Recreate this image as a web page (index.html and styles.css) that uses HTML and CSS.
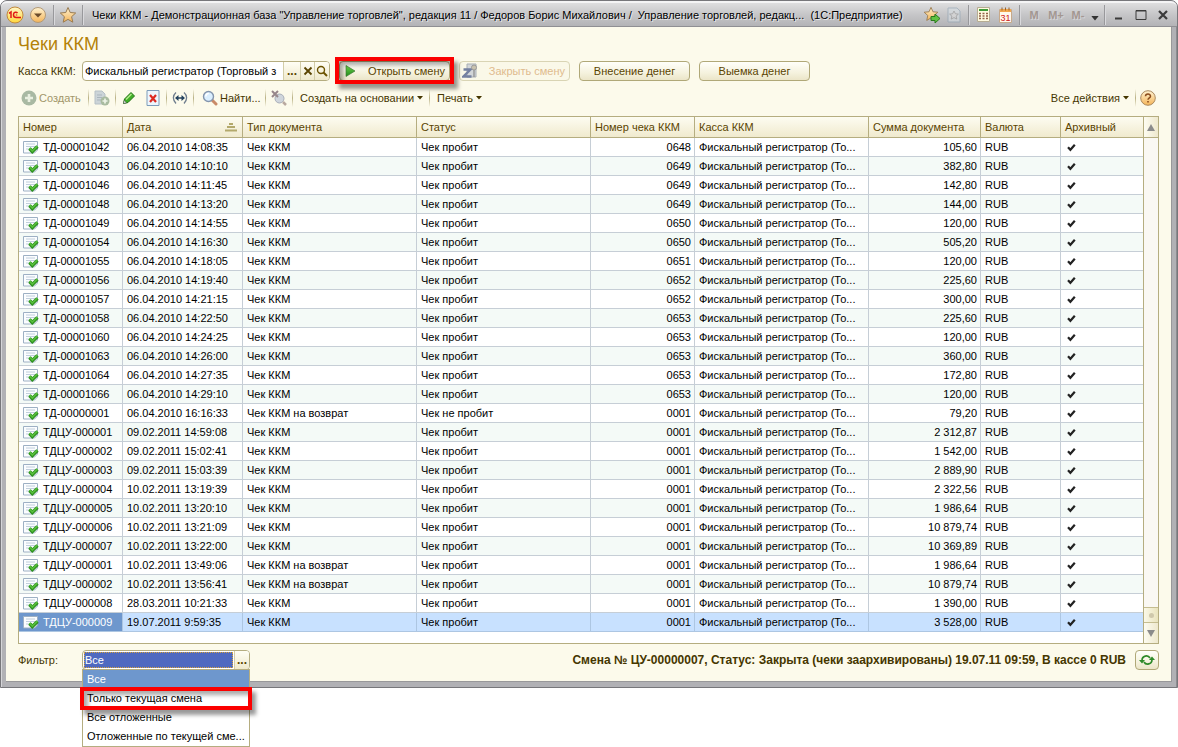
FILE: index.html
```html
<!DOCTYPE html>
<html lang="ru">
<head>
<meta charset="utf-8">
<title>Чеки ККМ</title>
<link rel="stylesheet" href="styles.css">
</head>
<body>
<svg class="defs" aria-hidden="true">
  <defs>
    <linearGradient id="gold" x1="0" y1="0" x2="0" y2="1"><stop offset="0" stop-color="#fff3d2"/><stop offset="1" stop-color="#f4b458"/></linearGradient>
    <linearGradient id="yellow" x1="0" y1="0" x2="0" y2="1"><stop offset="0" stop-color="#fff6c8"/><stop offset="1" stop-color="#ffd83a"/></linearGradient>
    <linearGradient id="green" x1="0" y1="0" x2="0" y2="1"><stop offset="0" stop-color="#6cd04a"/><stop offset="1" stop-color="#1e8a1a"/></linearGradient>
  </defs>
  <symbol id="i-doc" viewBox="0 0 16 14">
    <path d="M.5 1.500h14v8.500l-3 3H.5z" fill="#fbfdff" stroke="#9db0c4"/>
    <path d="M3 4h9M3 6.500h9M3 9h5" stroke="#c0cedb"/>
    <path d="M6.500 8.500l2.800 3L14.500 6.500" fill="none" stroke="#2c8f1f" stroke-width="3.400"/>
    <path d="M6.500 8l2.800 3L14.500 6" fill="none" stroke="#58c03c" stroke-width="1.600"/>
  </symbol>
  <symbol id="i-tick" viewBox="0 0 9 9"><path d="M1 4.200l2.400 2.600L7.800 1.800" fill="none" stroke="#222" stroke-width="2.200"/></symbol>
  <symbol id="i-mag" viewBox="0 0 16 16">
    <path d="M9.500 9.500l4.500 4.500" stroke="#c98a68" stroke-width="3" stroke-linecap="round"/>
    <circle cx="6.500" cy="6.500" r="5" fill="#dbefff" stroke="#8495ad" stroke-width="1.400"/>
    <path d="M3.800 6.500a3 3 0 0 1 3-3" stroke="#fff" stroke-width="1.500" fill="none"/>
  </symbol>
  <symbol id="i-star" viewBox="0 0 18 18"><path d="M9 1.500l2.200 5 5.500.500-4.100 3.700 1.200 5.500L9 13.400l-4.800 2.800 1.200-5.500L1.300 7l5.500-.5z" fill="url(#gold)" stroke="#9a7b50"/></symbol>
  <symbol id="i-down" viewBox="0 0 6 4"><path d="M0 0h6L3 3.500z" fill="currentColor"/></symbol>
</svg>

<div class="window">
  <header class="titlebar">
    <div class="tb-left">
      <button class="tb" aria-label="Главное меню"><svg width="18" height="18" viewBox="0 0 18 18"><circle cx="9" cy="9" r="8" fill="url(#yellow)" stroke="#c28a3c"/><path d="M3 7.300l2-1.300v6M11.500 7.200C10.500 5.600 7.500 5.800 7.500 8.700c0 1.800 1.200 2.800 2.800 2.800H15" fill="none" stroke="#e01818" stroke-width="1.500"/><path d="M11.300 9h-1.500" stroke="#e01818"/></svg></button>
      <button class="tb" aria-label="Меню"><svg width="18" height="18" viewBox="0 0 18 18"><circle cx="9" cy="9" r="7.500" fill="url(#gold)" stroke="#b39a78"/><path d="M5 7.500h8L9 11.500z" fill="#6b4c2c"/></svg></button>
      <i class="sep"></i>
      <button class="tb" aria-label="Избранное"><svg width="18" height="18"><use href="#i-star"/></svg></button>
      <i class="sep"></i>
    </div>
    <div class="caption">Чеки ККМ - Демонстрационная база "Управление торговлей", редакция 11 / Федоров Борис Михайлович /&nbsp; Управление торговлей, редакц...&nbsp; (1С:Предприятие)</div>
    <div class="tb-right">
      <button class="tb" aria-label="Добавить в избранное"><svg width="18" height="18" viewBox="0 0 18 18"><use href="#i-star" width="16" height="16"/><path d="M8 10.500h4V8l5 4.500-5 4.500v-2.500H8z" fill="#5fc244" stroke="#2b7a1c"/></svg></button>
      <button class="tb faint" aria-label="Страница"><svg width="14" height="16" viewBox="0 0 14 16"><path d="M1 1h9l3 3v11H1z" fill="#d6dde2" stroke="#8fa3b3"/><path d="M7 4l1.400 2.800 3 .3-2.300 2 .7 3L7 10.600l-2.800 1.500.7-3-2.300-2 3-.3z" fill="#ddd" stroke="#888" stroke-width=".8"/></svg></button>
      <i class="sep"></i>
      <button class="tb" aria-label="Калькулятор"><svg width="13" height="15" viewBox="0 0 13 15"><path d="M.5.500h12v14H.5z" fill="#fffbe0" stroke="#b6ac92"/><path d="M2 2h9v2H2z" fill="#3f9a38"/><path d="M2 6.500h9M2 9h9M2 11.500h9" stroke="#94634a" stroke-width="1.600" stroke-dasharray="2 1.500"/></svg></button>
      <button class="tb" aria-label="Календарь"><svg width="13" height="16" viewBox="0 0 13 16"><path d="M.5 2.500h12v13H.5z" fill="#fff8ec" stroke="#c7a98a"/><path d="M1 2h11v3H1z" fill="#f1a64c"/><path d="M3 .5v3M6.500.500v3M10 .5v3" stroke="#96602c"/><text x="6.500" y="13.500" class="cal">31</text></svg></button>
      <i class="sep"></i>
      <button class="tb mem">M</button><button class="tb mem">M+</button><button class="tb mem">M-</button>
      <button class="tb narrow" aria-label="Ещё"><svg width="8" height="5" viewBox="0 0 6 4"><use href="#i-down"/></svg></button>
      <i class="sep"></i>
      <button class="tb" aria-label="Свернуть"><svg width="12" height="12"><path d="M2 9.500h7" stroke="#3b3b3b" stroke-width="2"/></svg></button>
      <button class="tb" aria-label="Развернуть"><svg width="12" height="12"><path d="M1 1.500h10v9H1z" fill="none" stroke="#3b3b3b"/><path d="M1 2h10" stroke="#3b3b3b"/></svg></button>
      <button class="tb" aria-label="Закрыть"><svg width="12" height="12"><path d="M2 2l8 8M10 2l-8 8" stroke="#3b3b3b" stroke-width="2.200"/></svg></button>
    </div>
  </header>

  <main class="form">
    <h1>Чеки ККМ</h1>
    <div class="commands">
      <label for="kassa">Касса ККМ:</label>
      <div class="combo kassa">
        <input id="kassa" type="text" value="Фискальный регистратор (Торговый з">
        <button class="dots" aria-label="Выбрать">...</button>
        <button class="clear" aria-label="Очистить"><svg width="10" height="10"><path d="M1.500 1.500l7 7M8.500 1.500l-7 7" stroke="#5a4400" stroke-width="1.800"/></svg></button>
        <button class="look" aria-label="Открыть"><svg width="12" height="12"><circle cx="5" cy="5" r="3.500" fill="none" stroke="#6b5200" stroke-width="1.400"/><path d="M7.500 7.500l3.500 3.500" stroke="#6b5200" stroke-width="2"/></svg></button>
      </div>
      <div class="marked">
        <button class="btn with-icon"><svg width="11" height="12"><path d="M1 .5l9 5.500-9 5.500z" fill="url(#green)" stroke="#3f7a34" stroke-width=".7"/></svg><span>Открыть смену</span></button>
        <div class="frame frame-button"></div>
      </div>
      <button class="btn with-icon" disabled><svg width="16" height="16"><path d="M5 1h9v13H5z" fill="#d3d6d9" stroke="#a9afb6"/><path d="M1.500 6.500h7l-7 7h8" fill="none" stroke="#7480a0" stroke-width="2.400"/><circle cx="12" cy="4.500" r="2.500" fill="#c9c2ae" stroke="#999"/><path d="M12 7v7" stroke="#999" stroke-width="1.500"/></svg><span>Закрыть смену</span></button>
      <button class="btn">Внесение денег</button>
      <button class="btn">Выемка денег</button>
    </div>

    <div class="toolbar">
      <button class="tool create" disabled><svg width="16" height="16"><circle cx="8" cy="8" r="7.500" fill="#a9b9a3"/><path d="M8 4v8M4 8h8" stroke="#e9efe0" stroke-width="2.600"/></svg>Создать</button>
      <i class="line"></i>
      <button class="tool" disabled aria-label="Скопировать"><svg width="16" height="16"><path d="M1 1h7l3 3v10H1z" fill="#ccd4d8" stroke="#b6c0c6"/><path d="M3 5h5M3 7.500h5M3 10h4" stroke="#aab5bd"/><circle cx="11" cy="11" r="4.500" fill="#a9bba0"/><path d="M11 8.500v5M8.500 11h5" stroke="#eef4e8" stroke-width="1.700"/></svg></button>
      <i class="line"></i>
      <button class="tool" aria-label="Изменить"><svg width="14" height="14"><path d="M1.500 12.500l1-4.500L9 1.500l3.500 3.500L6 11.500z" fill="#3fae27" stroke="#237215"/><path d="M4 8.500L9.500 3" stroke="#b4ec8c" stroke-width="1.500"/><path d="M1.500 12.500l.7-3 2.200 2.200z" fill="#fff" stroke="#555" stroke-width=".6"/></svg></button>
      <button class="tool" aria-label="Пометить на удаление"><svg width="14" height="16"><path d="M1 .5h12v15H1z" fill="#eef6fd" stroke="#7d9cba"/><path d="M4 5l6 7M10 5l-6 7" stroke="#dd2a22" stroke-width="2.200"/></svg></button>
      <i class="line"></i>
      <button class="tool" aria-label="Период"><svg width="16" height="14"><path d="M4 1.500C.5 4.500.500 9 4 12.500M12 1.500c3.500 3 3.500 7.500 0 11" fill="none" stroke="#6e7c8d" stroke-width="1.300"/><path d="M4 7h8" stroke="#24425f" stroke-width="1.500"/><path d="M6.500 4v6L3 7zM9.500 4v6L13 7z" fill="#24425f"/></svg></button>
      <i class="line"></i>
      <button class="tool find"><svg width="16" height="16"><use href="#i-mag"/></svg>Найти...</button>
      <i class="line"></i>
      <button class="tool" disabled aria-label="Отменить поиск"><svg width="16" height="16" viewBox="0 0 16 16"><circle cx="8.500" cy="8.500" r="4.500" fill="#cfd5dc" stroke="#a8adb8"/><path d="M12 12l3 3" stroke="#b9a9a0" stroke-width="2.500"/><path d="M1 1l6 6M7 1L1 7" stroke="#96858a" stroke-width="2"/></svg></button>
      <i class="line"></i>
      <button class="tool menu base">Создать на основании<svg width="6" height="4"><use href="#i-down"/></svg></button>
      <i class="line"></i>
      <button class="tool menu">Печать<svg width="6" height="4"><use href="#i-down"/></svg></button>
      <span class="space"></span>
      <button class="tool menu">Все действия<svg width="6" height="4"><use href="#i-down"/></svg></button>
      <i class="line"></i>
      <button class="tool help" aria-label="Справка"><svg width="16" height="16"><circle cx="8" cy="8" r="7.300" fill="url(#gold)" stroke="#ab8a60"/><path d="M5.500 6.300C5.500 3.300 10.500 3.300 10.500 6.200 10.500 7.800 8 8 8 9.800" fill="none" stroke="#8b4d1d" stroke-width="1.500"/><path d="M7.200 11h1.600v1.600H7.200z" fill="#8b4d1d"/></svg></button>
    </div>

    <div class="grid">
      <table>
        <colgroup><col class="c-num"><col class="c-date"><col class="c-type"><col class="c-type"><col class="c-num"><col class="c-type"><col class="c-sum"><col class="c-cur"><col class="c-arch"></colgroup>
        <thead><tr><th>Номер</th><th><div class="sorted">Дата<svg width="12" height="9"><path d="M4 1h4M2 4h8M0 7.500h12" stroke="#b3a96c" stroke-width="2"/></svg></div></th><th>Тип документа</th><th>Статус</th><th>Номер чека ККМ</th><th>Касса ККМ</th><th>Сумма документа</th><th>Валюта</th><th>Архивный</th></tr></thead>
        <tbody id="rows"></tbody>
      </table>
      <div class="scroll">
        <button class="up" aria-label="Вверх"><svg width="8" height="7"><path d="M4 0l4 7H0z" fill="#8b8b8b"/></svg></button>
        <div class="track"></div>
        <div class="thumb"><i></i></div>
        <button class="down" aria-label="Вниз"><svg width="8" height="7"><path d="M4 7l4-7H0z" fill="#8b8b8b"/></svg></button>
      </div>
    </div>

    <footer>
      <label for="filter">Фильтр:</label>
      <div class="combo filter">
        <input id="filter" type="text" value="Все">
        <button class="dots" aria-label="Выбрать фильтр">...</button>
        <ul class="list">
          <li class="active">Все</li>
          <li>Только текущая смена<div class="frame frame-item"></div></li>
          <li>Все отложенные</li>
          <li>Отложенные по текущей сме...</li>
        </ul>
      </div>
      <strong>Смена № ЦУ-00000007, Статус: Закрыта (чеки заархивированы) 19.07.11 09:59, В кассе 0 RUB</strong>
      <button class="btn refresh" aria-label="Обновить"><svg width="16" height="12"><path d="M3 6.500C3 1.500 9 .5 11 4M13 5.500c0 5-6 6-8 2.500" fill="none" stroke="#2f8a2a" stroke-width="1.700"/><path d="M0 6h6L3 9.500zM10 6h6l-3-3.500z" fill="#2f8a2a"/></svg></button>
    </footer>
  </main>
</div>
<script src="app.js"></script>
</body>
</html>
```
FILE: styles.css
```css
* { box-sizing: border-box; }
body { margin: 0; min-height: 100vh; background: #fff; font: 11px/14px "Liberation Sans", Arial, sans-serif; color: #000; }
.defs { position: absolute; width: 0; height: 0; }
svg { display: block; flex: none; }
button, input { font: inherit; color: inherit; margin: 0; padding: 0; border: 0; background: none; }
button { display: flex; align-items: center; justify-content: center; }

.window { border: 1px solid #77777b; border-radius: 7px 7px 0 0; background: #b1b1b5; padding: 0 5px 5px; box-shadow: inset 1px 0 #d5d5d8, inset -1px 0 #8c8c90; }
.titlebar { display: flex; align-items: center; height: 26px; margin: 0 -5px; padding: 0 3px 0 5px; border-radius: 6px 6px 0 0; border-top: 2px solid #f4f4f5; border-bottom: 1px solid #8f8f93; background: linear-gradient(#dededf, #c6c6c8 50%, #b3b3b6); }
.tb-left, .tb-right { display: flex; align-items: center; }
.tb-left { gap: 5px; }
.tb-left .tb { width: 18px; height: 22px; }
.tb-left .tb + .tb { margin-right: 1px; }
.tb-right .tb { width: 22px; height: 22px; }
.tb-right .narrow { width: 12px; align-items: flex-end; padding-bottom: 5px; color: #333; }
.sep { width: 1px; height: 20px; margin: 0 3px; background: #98989b; box-shadow: 1px 0 #d9d9dc; }
.tb-left .sep { margin: 0; }
.caption { flex: 1; min-width: 0; padding-left: 9px; white-space: pre; overflow: hidden; text-shadow: 1px 1px #e6e6e8; }
.faint { opacity: .6; }
.mem { font-weight: bold; color: #a39791; text-shadow: 1px 1px #d5d5d8; }
.cal { font-size: 9px; fill: #d02020; text-anchor: middle; }

.form { padding: 10px 12px 11px; background: #fcfaeb; border: 1px solid #98989a; border-width: 0 1px 1px 0; color: #453600; }
h1 { margin: 0; font-size: 18px; line-height: 14px; font-weight: normal; color: #b48208; }
.commands { display: flex; align-items: center; gap: 9px; height: 20px; margin-top: 10px; }
.commands label, footer label { width: 64px; margin-right: -9px; white-space: nowrap; }
.combo { display: flex; height: 20px; border: 1px solid #b5ad80; border-radius: 4px; background: #fff; }
.combo input { flex: 1; min-width: 0; padding: 0 2px; color: #000; outline: none; }
.combo button { background: linear-gradient(#fffef5, #efe9cc); border-left: 1px solid #d3cda8; }
.combo .dots { width: 17px; font-weight: bold; font-size: 12px; color: #5a4400; }
.combo .clear { width: 14px; }
.combo .look { width: 15px; border-radius: 0 3px 3px 0; }
.kassa { width: 248px; }
.btn { width: 111px; height: 20px; border: 1px solid #b0a878; border-radius: 4px; background: linear-gradient(#fffffa, #f5f2de 60%, #ebe5c8); color: #5a4400; white-space: nowrap; }
.with-icon { justify-content: flex-start; padding: 0 4px 0 5px; }
.with-icon span { flex: 1; text-align: right; }
.btn:disabled { border-color: #d9d4b4; background: #faf8e8; color: #dfbb8e; padding-left: 2px; }
.marked { position: relative; }
.frame { position: absolute; border: 4px solid #fb0000; box-shadow: 4px 5px 4px #0006, inset 4px 4px 4px #0005; pointer-events: none; }
.frame-button { inset: -4px -4px -3px; }
.frame-item { inset: -2px -3px; }

.toolbar { display: flex; align-items: center; height: 24px; margin-top: 5px; }
.tool { min-width: 24px; height: 20px; padding: 0 4px; white-space: nowrap; gap: 3px; color: #453600; }
.tool:disabled { color: #a1966a; }
.create { width: 69px; justify-content: flex-start; padding-left: 3px; gap: 2px; }
.find { width: 69px; justify-content: flex-start; padding-left: 7px; gap: 2px; }
.menu { padding: 0 5px 0 6px; }
.base { width: 134px; }
.line { width: 1px; height: 18px; margin: 0 1px; background: linear-gradient(#fcfaeb, #b9b184, #fcfaeb); }
.space { flex: 1; }
.help { min-width: 22px; padding: 0; }

.grid { display: flex; margin-top: 6px; border: 1px solid #b5ad80; background: #fff; }
table { flex: 1; width: 100%; table-layout: fixed; border-collapse: separate; border-spacing: 0; margin-bottom: 11px; color: #000; }
.c-num { width: 104px; }
.c-date { width: 120px; }
.c-type { width: 174px; }
.c-sum { width: 112px; }
.c-cur { width: 80px; }
.c-arch { width: 82px; }
th, td { padding: 0 4px; text-align: left; font-weight: normal; white-space: nowrap; overflow: hidden; border-right: 1px solid #c6ced6; border-bottom: 1px solid #c6ced6; }
th { height: 21px; color: #5a4400; border-color: #b5ad80; background: linear-gradient(#fdfcf1, #f0eace); }
td { height: 19px; line-height: 18px; }
th:last-child, td:last-child { border-right: 0; }
td:last-child { padding-left: 6px; }
.sorted { display: flex; align-items: center; justify-content: space-between; padding-right: 1px; }
tbody tr:nth-child(even) { background: #f4faf7; }
.num { text-align: right; padding-right: 3px; }
.id { display: flex; align-items: center; gap: 4px; }
tbody tr.current { background: #c8e1ff; }
.current td { border-color: #adc6e2; }
.current td:first-child { background: #6e97cd; color: #fff; }

.scroll { display: flex; flex-direction: column; width: 16px; border-left: 1px solid #b5ad80; background: #faf8f3; }
.scroll button { background: linear-gradient(90deg, #fdfcf1, #eee8cd); }
.up { height: 21px; border-bottom: 1px solid #b5ad80; }
.track { flex: 1; }
.thumb { display: flex; align-items: center; justify-content: center; height: 16px; border: 1px solid #c5bd90; border-width: 1px 0; background: linear-gradient(90deg, #fbf9e8, #e9e3bd); }
.thumb i { width: 5px; height: 5px; border-radius: 50%; background: #cfc8ab; }
.down { height: 20px; }

footer { display: flex; align-items: center; gap: 9px; margin-top: 6px; }
.filter { position: relative; width: 168px; }
.filter input { margin: 1px; padding-left: 1px; background: #4e69c0; color: #fff; outline: 1px dotted #d8a33c; outline-offset: -1px; }
.filter .dots { width: 15px; border-radius: 0 3px 3px 0; }
.list { position: absolute; z-index: 1; top: 18px; left: -1px; right: -1px; margin: 0; padding: 0; list-style: none; border: 1px solid #b5ad80; background: #fff; color: #000; }
.list li { position: relative; height: 19px; padding: 0 4px; line-height: 19px; white-space: nowrap; }
.list .active { background: #6e97cd; color: #fff; }
footer strong { flex: 1; text-align: right; font-size: 12px; color: #453600; white-space: nowrap; }
.refresh { width: 24px; }
```
FILE: app.js
```js
const receipts = `ТД-00001042|06.04.2010 14:08:35|0648|105,60
ТД-00001043|06.04.2010 14:10:10|0649|382,80
ТД-00001046|06.04.2010 14:11:45|0649|142,80
ТД-00001048|06.04.2010 14:13:20|0649|144,00
ТД-00001049|06.04.2010 14:14:55|0650|120,00
ТД-00001054|06.04.2010 14:16:30|0650|505,20
ТД-00001055|06.04.2010 14:18:05|0651|120,00
ТД-00001056|06.04.2010 14:19:40|0652|225,60
ТД-00001057|06.04.2010 14:21:15|0652|300,00
ТД-00001058|06.04.2010 14:22:50|0653|225,60
ТД-00001060|06.04.2010 14:24:25|0653|120,00
ТД-00001063|06.04.2010 14:26:00|0653|360,00
ТД-00001064|06.04.2010 14:27:35|0653|172,80
ТД-00001066|06.04.2010 14:29:10|0653|120,00
ТД-00000001|06.04.2010 16:16:33|0001|79,20|Чек ККМ на возврат|Чек не пробит
ТДЦУ-000001|09.02.2011 14:59:08|0001|2 312,87
ТДЦУ-000002|09.02.2011 15:02:41|0001|1 542,00
ТДЦУ-000003|09.02.2011 15:03:39|0001|2 889,90
ТДЦУ-000004|10.02.2011 13:19:39|0001|2 322,56
ТДЦУ-000005|10.02.2011 13:20:10|0001|1 986,64
ТДЦУ-000006|10.02.2011 13:21:09|0001|10 879,74
ТДЦУ-000007|10.02.2011 13:22:00|0001|10 369,89
ТДЦУ-000001|10.02.2011 13:49:06|0001|1 986,64|Чек ККМ на возврат
ТДЦУ-000002|10.02.2011 13:56:41|0001|10 879,74|Чек ККМ на возврат
ТДЦУ-000008|28.03.2011 10:21:33|0001|1 390,00
ТДЦУ-000009|19.07.2011 9:59:35|0001|3 528,00`.split("\n").map(line => line.split("|"));

document.getElementById("rows").innerHTML = receipts.map((r, i) => {
  const [id, date, check, sum, type = "Чек ККМ", status = "Чек пробит"] = r;
  const current = i === receipts.length - 1 ? ' class="current"' : "";
  return `<tr${current}><td><div class="id"><svg width="16" height="14"><use href="#i-doc"/></svg>${id}</div></td><td>${date}</td><td>${type}</td><td>${status}</td><td class="num">${check}</td><td>Фискальный регистратор (То...</td><td class="num">${sum}</td><td>RUB</td><td><svg width="9" height="9"><use href="#i-tick"/></svg></td></tr>`;
}).join("");
```
